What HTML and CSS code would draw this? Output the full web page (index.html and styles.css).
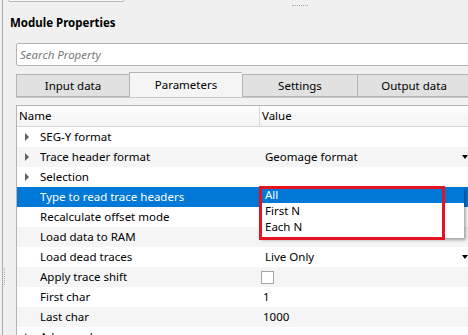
FILE: index.html
```html
<!DOCTYPE html>
<html lang="en">
<head>
    <meta charset="UTF-8">
    <meta name="viewport" content="width=device-width, initial-scale=1.0">
    <title>Module Properties</title>
    <link rel="stylesheet" href="styles.css">
</head>
<body>
    <div id="panel">
        <div class="top-box"></div>
        <span class="grip grip-top"></span>
        <span class="grip grip-left"></span>

        <h2 class="title">Module Properties</h2>
        <input type="text" class="search" placeholder="Search Property">

        <!-- Tabs -->
        <div class="tabs">
            <div class="tab">Input data</div>
            <div class="tab active">Parameters</div>
            <div class="tab wide">Settings</div>
            <div class="tab">Output data</div>
        </div>

        <div class="pane">
            <div class="tree">
                <div class="row head">
                    <div class="cell name">Name</div>
                    <div class="cell value">Value</div>
                </div>
                <div class="row">
                    <div class="cell name"><span class="arrow"></span>SEG-Y format</div>
                    <div class="cell value"></div>
                </div>
                <div class="row alt">
                    <div class="cell name"><span class="arrow"></span>Trace header format</div>
                    <div class="cell value combo">Geomage format<span class="caret"></span></div>
                </div>
                <div class="row">
                    <div class="cell name"><span class="arrow"></span>Selection</div>
                    <div class="cell value"></div>
                </div>
                <div class="row selected">
                    <div class="cell name">Type to read trace headers</div>
                    <div class="cell value"></div>
                </div>
                <div class="row">
                    <div class="cell name">Recalculate offset mode</div>
                    <div class="cell value"></div>
                </div>
                <div class="row alt">
                    <div class="cell name">Load data to RAM</div>
                    <div class="cell value"></div>
                </div>
                <div class="row">
                    <div class="cell name">Load dead traces</div>
                    <div class="cell value combo">Live Only<span class="caret"></span></div>
                </div>
                <div class="row alt">
                    <div class="cell name">Apply trace shift</div>
                    <div class="cell value"><span class="check"></span></div>
                </div>
                <div class="row">
                    <div class="cell name">First char</div>
                    <div class="cell value num">1</div>
                </div>
                <div class="row alt">
                    <div class="cell name">Last char</div>
                    <div class="cell value num">1000</div>
                </div>
                <div class="row">
                    <div class="cell name"><span class="arrow"></span>Advanced</div>
                    <div class="cell value"></div>
                </div>
            </div>
        </div>

        <!-- open combo list -->
        <ul class="popup">
            <li class="current">All</li>
            <li>First N</li>
            <li>Each N</li>
        </ul>
        <div class="mark"></div>
    </div>
</body>
</html>
```

FILE: styles.css
```css
body {
    margin: 0;
    background: #f0f0f0;
    font-family: "Noto Sans", "Open Sans", sans-serif;
    font-size: 11px;
    color: #000;
    overflow: hidden;
}
#panel {
    position: relative;
    margin-left: 2px;
    border-left: 1px solid #acacac;
    height: 335px;
    width: 480px;
}
.top-box {
    margin-left: 5px;
    width: 114px;
    height: 1px;
    border: 1px solid #b9b9b9;
    border-top: none;
    border-radius: 0 0 3px 3px;
    background: #f7f7f7;
}
.grip {
    position: absolute;
}
.grip-top {
    left: 289px;
    top: 5px;
    width: 16px;
    border-top: 1px dotted #a8a8a8;
}
.grip-left {
    left: 1px;
    top: 268px;
    height: 17px;
    border-left: 1px dotted #a8a8a8;
}
.title {
    margin: 13px 0 0 7px;
    font-size: 11.5px;
    line-height: 16px;
    font-weight: bold;
}
.search {
    display: block;
    box-sizing: border-box;
    margin: 12px 0 0 13px;
    width: 470px;
    height: 23px;
    padding: 0 3px;
    border: 1px solid #b4b4b4;
    border-radius: 2px;
    background: #fff;
    font-family: inherit;
    font-size: 11.5px;
}
.search::placeholder {
    color: #7a7a7a;
    font-style: italic;
}
.tabs {
    display: flex;
    align-items: flex-end;
    margin: 6px 0 0 13px;
    height: 25px;
}
.tab {
    box-sizing: border-box;
    width: 113px;
    height: 23px;
    line-height: 22px;
    font-size: 11.5px;
    text-align: center;
    background: #e1e1e1;
    border: 1px solid #b4b4b4;
    border-right: none;
    flex-shrink: 0;
}
.tab.wide {
    width: 115px;
}
.tab.active {
    height: 25px;
    line-height: 24px;
    background: #f5f5f5;
    border-bottom: none;
}
.pane {
    margin-left: 13px;
    padding-top: 7px;
    border-top: 1px solid #c8c8c8;
    background: #f2f2f2;
}
.tree {
    width: 460px;
    background: #fff;
    border: 1px solid #b4b4b4;
    border-right: none;
}
.row {
    display: flex;
    height: 20px;
    line-height: 20px;
    font-size: 11.5px;
}
.row.alt {
    background: #f5f5f5;
}
.row.selected {
    background: #0078d7;
    color: #fff;
}
.row.head {
    background: linear-gradient(#fdfdfd, #f3f3f3);
    border-bottom: 1px solid #d5d5d5;
}
.cell {
    white-space: nowrap;
}
.cell.name {
    width: 243px;
    padding-left: 23px;
    box-sizing: border-box;
    display: flex;
    align-items: center;
}
.head .cell.name {
    padding-left: 2px;
    border-right: 1px solid #dadada;
}
.cell.value {
    flex: 1;
    padding-left: 3px;
    display: flex;
    align-items: center;
}
.head .cell.value {
    padding-left: 2px;
}
.cell.combo {
    padding-left: 5px;
    padding-right: 9px;
    justify-content: space-between;
}
.arrow {
    margin-left: -15px;
    margin-right: 11px;
    width: 0;
    height: 0;
    border-left: 4px solid #606060;
    border-top: 4px solid transparent;
    border-bottom: 4px solid transparent;
}
.caret {
    width: 0;
    height: 0;
    border-top: 4px solid #000;
    border-left: 3px solid transparent;
    border-right: 3px solid transparent;
}
.check {
    width: 11px;
    height: 11px;
    margin-left: -2px;
    border: 1px solid #a3a3a3;
    background: #fff;
}
.popup {
    position: absolute;
    left: 256px;
    top: 187px;
    width: 205px;
    margin: 0;
    padding: 0 0 3px;
    list-style: none;
    font-size: 11.5px;
    background: #fff;
    box-shadow: 2px 2px 3px rgba(0, 0, 0, 0.35);
}
.popup li {
    height: 16px;
    line-height: 16px;
    padding-left: 6px;
}
.popup li.current {
    background: #0078d7;
    color: #fff;
}
.mark {
    position: absolute;
    left: 256px;
    top: 186px;
    width: 180px;
    height: 48px;
    border: 3px solid #e3141f;
}
```
